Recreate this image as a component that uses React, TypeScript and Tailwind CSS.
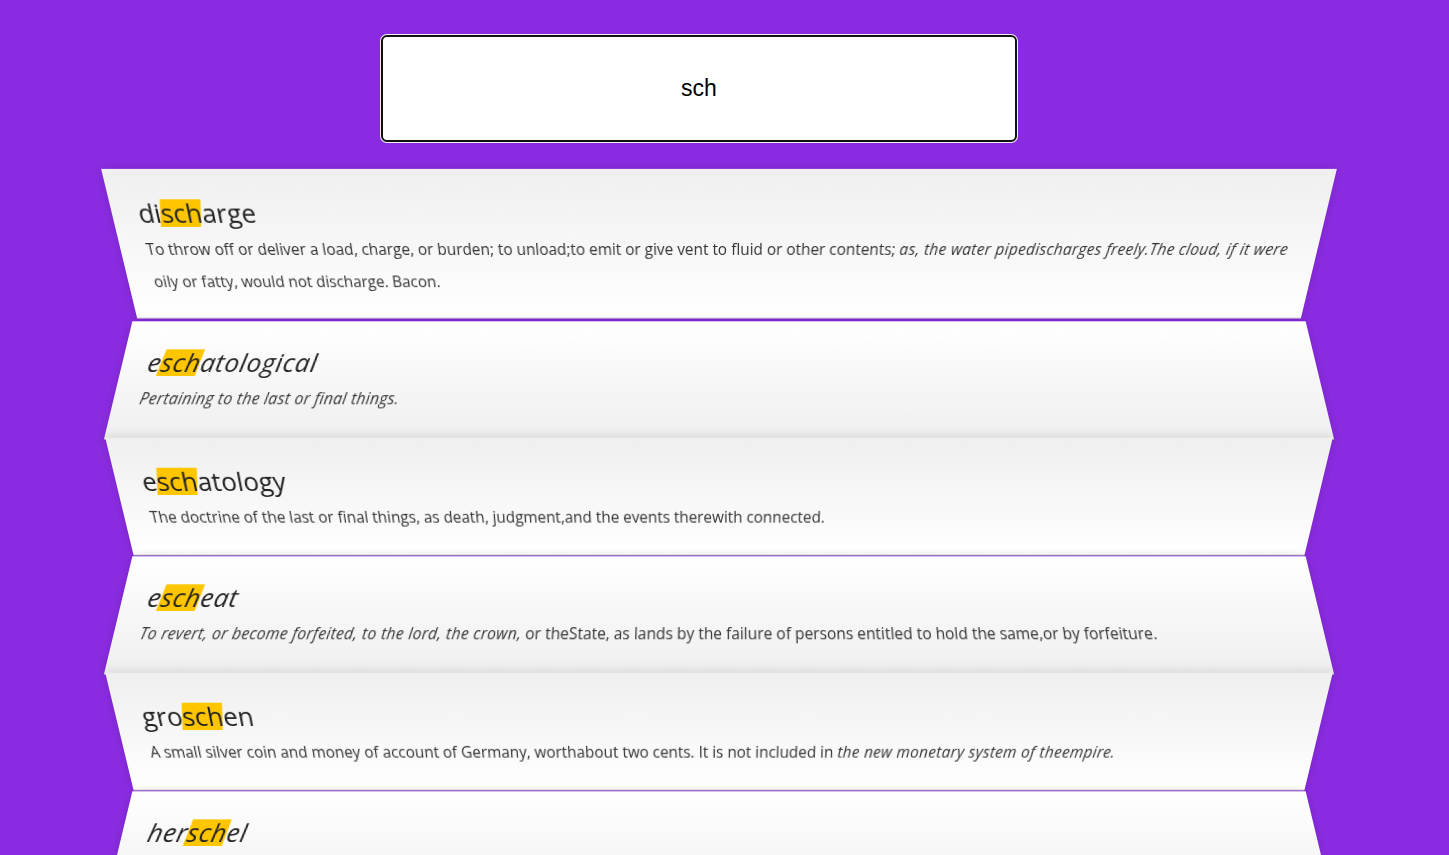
import React from "react";

type Seg = [string, boolean];

const results: { word: string; italic: boolean; def: Seg[] }[] = [
  {
    word: "discharge",
    italic: false,
    def: [
      ["To throw off or deliver a load, charge, or burden; to unload;to emit or give vent to fluid or other contents; ", false],
      ["as, the water pipedischarges freely.The cloud, if it were", true],
      [" oily or fatty, would not discharge. Bacon.", false],
    ],
  },
  {
    word: "eschatological",
    italic: true,
    def: [["Pertaining to the last or final things.", true]],
  },
  {
    word: "eschatology",
    italic: false,
    def: [["The doctrine of the last or final things, as death, judgment,and the events therewith connected.", false]],
  },
  {
    word: "escheat",
    italic: true,
    def: [
      ["To revert, or become forfeited, to the lord, the crown,", true],
      [" or theState, as lands by the failure of persons entitled to hold the same,or by forfeiture.", false],
    ],
  },
  {
    word: "groschen",
    italic: false,
    def: [
      ["A small silver coin and money of account of Germany, worthabout two cents. It is not included in ", false],
      ["the new monetary system of theempire.", true],
    ],
  },
  {
    word: "herschel",
    italic: true,
    def: [["The planet Uranus, so called fromSir William Herschel, who discovered it.", false]],
  },
];

function Highlighted({ word, query }: { word: string; query: string }) {
  const i = word.indexOf(query);
  return (
    <>
      {word.slice(0, i)}
      <span className="relative isolate inline-block leading-none before:absolute before:inset-x-0 before:-top-px before:bottom-0 before:-z-10 before:skew-x-[-10deg] before:bg-[#ffc600]">
        {query}
      </span>
      {word.slice(i + query.length)}
    </>
  );
}

export default function App() {
  const query = "sch";
  return (
    <div className="min-h-screen bg-[#8a2be2] pt-[35px] pb-10 font-['Open_Sans',sans-serif]">
      <input
        value={query}
        readOnly
        className="ml-[381px] block h-[107px] w-[636px] rounded-md border-2 border-[#111] bg-white text-center font-['Liberation_Sans',Arial,sans-serif] text-[23px] text-black shadow-[0_0_0_1px_#f2f2f2] outline-none"
      />
      <ul className="mt-[26px] ml-[119px] w-[1200px]">
        {results.map((r, index) => (
          <li
            key={r.word}
            className={
              index % 2 === 0
                ? "border-b border-[#d8d8d8] bg-[linear-gradient(to_top,#ffffff_0%,#efefef_100%)] pt-[21px] pr-[22px] pb-[21px] pl-[26px] shadow-[0_0_10px_rgba(0,0,0,0.14)] [transform:perspective(100px)_rotateX(-2.3deg)_translateY(3px)]"
                : "border-b border-[#d8d8d8] bg-[linear-gradient(to_bottom,#ffffff_0%,#efefef_100%)] pt-[21px] pr-[22px] pb-[21px] pl-[26px] shadow-[0_0_10px_rgba(0,0,0,0.14)] [transform:perspective(100px)_rotateX(2.3deg)_translateY(2px)]"
            }
          >
            <div
              className={
                r.italic
                  ? "text-[25.8px] leading-[42px] tracking-[0.6px] text-[#222] italic"
                  : "text-[25.8px] leading-[42px] text-[#222]"
              }
            >
              <Highlighted word={r.word} query={query} />
            </div>
            <p className="text-[15.4px] leading-[32.5px] text-[#333]">
              {r.def.map(([text, it], i) => (
                <span key={i} className={it ? "italic tracking-[0.35px]" : ""}>
                  {text}
                </span>
              ))}
            </p>
          </li>
        ))}
      </ul>
    </div>
  );
}
